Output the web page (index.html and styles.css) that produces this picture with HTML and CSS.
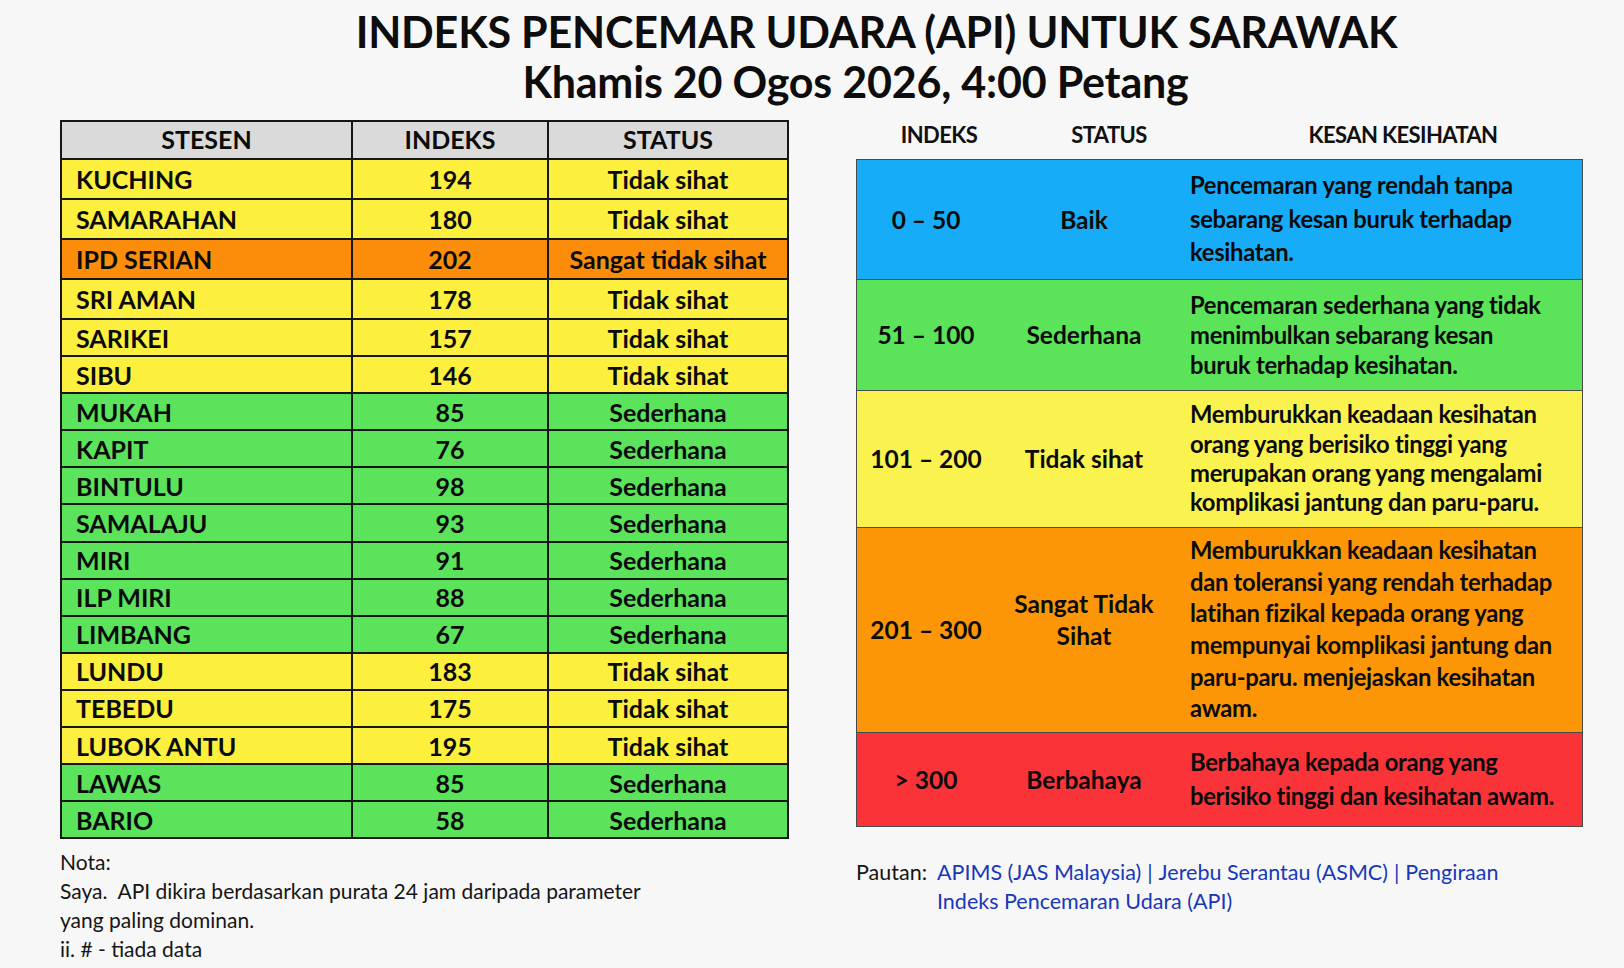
FILE: index.html
```html
<!DOCTYPE html>
<html lang="ms">
<head>
<meta charset="utf-8">
<title>Indeks Pencemar Udara (API) untuk Sarawak</title>
<link rel="stylesheet" href="styles.css">
</head>
<body>
<div class="page">
  <header class="title">
    <h1 class="title-main">INDEKS PENCEMAR UDARA (API) UNTUK SARAWAK</h1>
    <p class="title-sub">Khamis 20 Ogos 2026, 4:00 Petang</p>
  </header>

  <main class="content">
    <section class="stations">
      <div class="station-table">
        <div class="cell head">STESEN</div>
        <div class="cell head">INDEKS</div>
        <div class="cell head">STATUS</div>

        <div class="cell name y">KUCHING</div><div class="cell num y">194</div><div class="cell stat y">Tidak sihat</div>
        <div class="cell name y">SAMARAHAN</div><div class="cell num y">180</div><div class="cell stat y">Tidak sihat</div>
        <div class="cell name o">IPD SERIAN</div><div class="cell num o">202</div><div class="cell stat o">Sangat tidak sihat</div>
        <div class="cell name y">SRI AMAN</div><div class="cell num y">178</div><div class="cell stat y">Tidak sihat</div>
        <div class="cell name y">SARIKEI</div><div class="cell num y">157</div><div class="cell stat y">Tidak sihat</div>
        <div class="cell name y">SIBU</div><div class="cell num y">146</div><div class="cell stat y">Tidak sihat</div>
        <div class="cell name g">MUKAH</div><div class="cell num g">85</div><div class="cell stat g">Sederhana</div>
        <div class="cell name g">KAPIT</div><div class="cell num g">76</div><div class="cell stat g">Sederhana</div>
        <div class="cell name g">BINTULU</div><div class="cell num g">98</div><div class="cell stat g">Sederhana</div>
        <div class="cell name g">SAMALAJU</div><div class="cell num g">93</div><div class="cell stat g">Sederhana</div>
        <div class="cell name g">MIRI</div><div class="cell num g">91</div><div class="cell stat g">Sederhana</div>
        <div class="cell name g">ILP MIRI</div><div class="cell num g">88</div><div class="cell stat g">Sederhana</div>
        <div class="cell name g">LIMBANG</div><div class="cell num g">67</div><div class="cell stat g">Sederhana</div>
        <div class="cell name y">LUNDU</div><div class="cell num y">183</div><div class="cell stat y">Tidak sihat</div>
        <div class="cell name y">TEBEDU</div><div class="cell num y">175</div><div class="cell stat y">Tidak sihat</div>
        <div class="cell name y">LUBOK ANTU</div><div class="cell num y">195</div><div class="cell stat y">Tidak sihat</div>
        <div class="cell name g">LAWAS</div><div class="cell num g">85</div><div class="cell stat g">Sederhana</div>
        <div class="cell name g">BARIO</div><div class="cell num g">58</div><div class="cell stat g">Sederhana</div>
      </div>

      <div class="notes">
        <p>Nota:</p>
        <p>Saya.&nbsp; API dikira berdasarkan purata 24 jam daripada parameter yang paling dominan.</p>
        <p>ii. # - tiada data</p>
      </div>
    </section>

    <section class="legend">
      <div class="legend-head">
        <div class="lh-idx">INDEKS</div>
        <div class="lh-stat">STATUS</div>
        <div class="lh-desc">KESAN KESIHATAN</div>
      </div>

      <div class="legend-table">
        <div class="band band-blue">
          <div class="b-idx">0 – 50</div>
          <div class="b-stat">Baik</div>
          <div class="b-desc">Pencemaran yang rendah tanpa sebarang kesan buruk terhadap kesihatan.</div>
        </div>
        <div class="band band-green">
          <div class="b-idx">51 – 100</div>
          <div class="b-stat">Sederhana</div>
          <div class="b-desc">Pencemaran sederhana yang tidak menimbulkan sebarang kesan buruk terhadap kesihatan.</div>
        </div>
        <div class="band band-yellow">
          <div class="b-idx">101 – 200</div>
          <div class="b-stat">Tidak sihat</div>
          <div class="b-desc">Memburukkan keadaan kesihatan orang yang berisiko tinggi yang merupakan orang yang mengalami komplikasi jantung dan paru-paru.</div>
        </div>
        <div class="band band-orange">
          <div class="b-idx">201 – 300</div>
          <div class="b-stat b-stat-raised">Sangat Tidak Sihat</div>
          <div class="b-desc">Memburukkan keadaan kesihatan dan toleransi yang rendah terhadap latihan fizikal kepada orang yang mempunyai komplikasi jantung dan paru-paru. menjejaskan kesihatan awam.</div>
        </div>
        <div class="band band-red">
          <div class="b-idx">&gt; 300</div>
          <div class="b-stat">Berbahaya</div>
          <div class="b-desc">Berbahaya kepada orang yang berisiko tinggi dan kesihatan awam.</div>
        </div>
      </div>

      <div class="links">
        <span class="links-label">Pautan:</span>
        <div class="links-list">
          <div class="links-line"><a href="#">APIMS (JAS Malaysia)</a><span class="sep">|</span><a href="#">Jerebu Serantau (ASMC)</a><span class="sep">|</span><a href="#">Pengiraan</a></div>
          <div class="links-line"><a href="#">Indeks Pencemaran Udara (API)</a></div>
        </div>
      </div>
    </section>
  </main>
</div>
</body>
</html>
```

FILE: styles.css
```css
* { box-sizing: border-box; }

html, body {
  margin: 0;
  padding: 0;
  background: #f7f7f7;
}

body {
  font-family: Lato, "Open Sans", "DejaVu Sans", sans-serif;
  color: #111;
}

.page {
  width: 1624px;
  height: 968px;
  overflow: hidden;
}

/* ---------- Title ---------- */
.title {
  padding: 7px 0 0 87px;
  text-align: center;
}

.title-main,
.title-sub {
  margin: 0;
  font-size: 43px;
  line-height: 50px;
  letter-spacing: -0.2px;
  font-weight: 700;
  color: #0d0d0d;
}

.title-main {
  padding-left: 42px;
}

/* ---------- Content layout ---------- */
.content {
  display: flex;
  gap: 67px;
  padding: 13px 0 0 60px;
}

/* ---------- Station table ---------- */
.station-table {
  display: grid;
  grid-template-columns: 289px 194px 238px;
  grid-template-rows: 36px repeat(4, 38px) repeat(14, 35.1px);
  gap: 2px;
  padding: 2px;
  background: #161616;
  width: max-content;
}

.cell {
  display: flex;
  align-items: center;
  justify-content: center;
  font-size: 25px;
  font-weight: 700;
  color: #0b0b0b;
  white-space: nowrap;
}

.cell.head { background: #dadada; padding-bottom: 3px; }
.cell.name { justify-content: flex-start; padding-left: 14px; }
.cell.y { background: #fcef3e; }
.cell.o { background: #fb8d0b; }
.cell.g { background: #5be35b; }

.notes {
  width: 590px;
  margin-top: 8px;
  font-size: 21px;
  line-height: 29px;
  color: #151515;
}

.notes p { margin: 0; }

/* ---------- Legend ---------- */
.legend {
  width: 727px;
}

.legend-head {
  display: grid;
  grid-template-columns: 166px 174px 1fr;
  height: 39px;
  font-size: 22px;
  line-height: 30px;
  letter-spacing: -0.6px;
  font-weight: 700;
  text-align: center;
  color: #111;
}

.lh-desc { padding-left: 27px; }

.legend-table {
  border: 1px solid #4a4a4a;
  border-bottom: 0;
}

.band {
  display: grid;
  grid-template-columns: 138px 178px 1fr;
  align-items: center;
  border-bottom: 1px solid #4a4a4a;
  font-size: 24.5px;
  font-weight: 700;
  color: #0b0b0b;
}

.b-idx,
.b-stat {
  text-align: center;
  line-height: 31.6px;
}

.b-stat-raised { padding-bottom: 20px; }

.b-desc {
  padding: 0 23px 0 17px;
  font-size: 23.8px;
  letter-spacing: -0.3px;
}

.band-blue   { height: 120px; background: #16acf8; line-height: 33.7px; }
.band-green  { height: 111px; background: #5be35a; line-height: 30px; }
.band-yellow { height: 137px; background: #faf34f; line-height: 29.4px; }
.band-orange { height: 205px; background: #fd9607; line-height: 31.6px; }
.band-red    { height: 94px;  background: #fa3338; line-height: 33.3px; }

.links {
  display: flex;
  margin-top: 31px;
  font-size: 21.5px;
  line-height: 29.3px;
  color: #151515;
}

.links-label {
  flex: none;
  width: 81px;
}

.links-list {
  color: #1838ba;
}

.links-list a {
  color: #1838ba;
  text-decoration: none;
}

.sep {
  margin: 0 6px;
}
```
